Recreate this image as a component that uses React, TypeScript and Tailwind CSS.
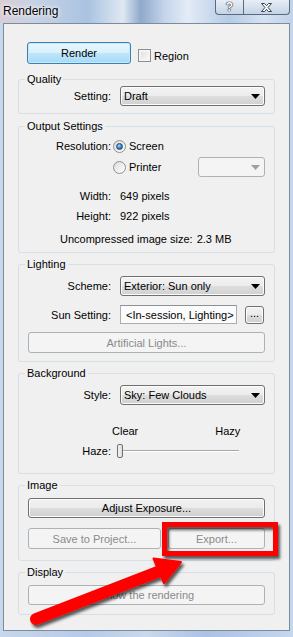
import React from 'react'

const Arrow = ({ color = '#000' }: { color?: string }) => (
  <svg width="9" height="5" viewBox="0 0 9 5" className="shrink-0">
    <path d="M0 0h9L4.5 5z" fill={color} />
  </svg>
)

function Combo({ value, w = 'w-[145px]' }: { value: string; w?: string }) {
  return (
    <div
      className={`${w} h-[20px] flex items-center justify-between pl-[3px] pr-[4px] rounded-[3px] border border-[#707070] bg-[linear-gradient(#f3f3f3,#ececec_50%,#dedede_51%,#d0d0d0)] shadow-[inset_0_0_0_1px_#fcfcfc]`}
    >
      <span>{value}</span>
      <Arrow />
    </div>
  )
}

function Btn({ children, disabled, className = '' }: { children: React.ReactNode; disabled?: boolean; className?: string }) {
  return (
    <div
      className={`flex items-center justify-center rounded-[3px] border ${
        disabled
          ? 'border-[#adb2b5] bg-[#f4f4f4] text-[#8a8a8a]'
          : 'border-[#707070] bg-[linear-gradient(#f2f2f2,#ebebeb_50%,#dddddd_51%,#cfcfcf)] shadow-[inset_0_0_0_1px_#fcfcfc]'
      } ${className}`}
    >
      {children}
    </div>
  )
}

function Radio({ on }: { on?: boolean }) {
  return (
    <div className="w-[13px] h-[13px] rounded-full border border-[#8e8f8f] bg-[linear-gradient(135deg,#dcdcdc,#ffffff)] flex items-center justify-center shrink-0">
      {on && <div className="w-[7px] h-[7px] rounded-full bg-[radial-gradient(circle_at_40%_35%,#a9d9f7,#2779b8_60%,#0d4d86)] border border-[#24497c]" />}
    </div>
  )
}

function Group({ title, className = '', children }: { title: string; className?: string; children: React.ReactNode }) {
  return (
    <fieldset className={`mx-[14px] px-[9px] border border-[#d5dfe5] rounded-[3px] ${className}`}>
      <legend className="-ml-[3px] px-[2px] leading-[14px]">{title}</legend>
      {children}
    </fieldset>
  )
}

function Row({ label, className = '', children }: { label: string; className?: string; children: React.ReactNode }) {
  return (
    <div className={`flex items-center ${className}`}>
      <div className="w-[83px] text-right shrink-0">{label}</div>
      <div className="ml-[9px] flex items-center">{children}</div>
    </div>
  )
}

export default function App() {
  return (
    <div className="relative w-[293px] h-[637px] overflow-hidden font-['Liberation_Sans',Arial,sans-serif] text-[11px] leading-[16px] text-black bg-[linear-gradient(90deg,#c7d7ec,#b4cbe6_30%,#c9d9ee_50%,#a9c3e2_70%,#c4d7ee)]">
      {/* title bar */}
      <div className="h-[23px] flex items-start bg-[linear-gradient(90deg,#d9cdd6,#c6d2e4_12%,#aac3e1_30%,#dfe8f2_42%,#8fa9cb_48%,#c3d4ea_56%,#e4ecf6_64%,#b5cbe6_78%,#d6e2f1_90%,#bfd3ea)]">
        <div className="ml-[3px] mt-[3px] text-[12px] leading-[16px] [text-shadow:0_0_6px_#fff,0_0_3px_#fff]">Rendering</div>
        <div className="ml-auto mr-[3px] flex h-[15px]">
          <div className="w-[29px] h-[15px] border border-t-0 border-[#5b6b7d] rounded-bl-[4px] bg-[linear-gradient(#e8eef6,#c4d3e5)] flex items-center justify-center">
            <span className="font-bold text-[12px] leading-[12px] text-white [text-shadow:0_0_1px_#222,0_0_1px_#222,0_0_1px_#222]">?</span>
          </div>
          <div className="w-[46px] h-[15px] border border-t-0 border-l-0 border-[#5b6b7d] rounded-br-[4px] bg-[linear-gradient(#e8eef6,#c4d3e5)] flex items-center justify-center">
            <svg width="13" height="11" viewBox="0 0 13 11">
              <path d="M1.5 1.5h3l2 2.2 2-2.2h3l-3.5 4 3.5 4h-3l-2-2.2-2 2.2h-3l3.5-4z" fill="#fff" stroke="#3a4450" strokeWidth="1" strokeLinejoin="round" />
            </svg>
          </div>
        </div>
      </div>

      {/* client area */}
      <div className="mx-[3px] h-[608px] border border-[#7d8b9b] bg-[#f0f0f0] flex flex-col">
        <div className="mt-[18px] ml-[23px] flex items-center">
          <div className="w-[104px] h-[22px] rounded-[3px] border border-[#3c7fb1] bg-[linear-gradient(#eaf6fd,#d9f0fc_50%,#bee6fd_51%,#a7d9f5)] shadow-[inset_0_0_0_1px_#c4e9fb] flex items-center justify-center">
            Render
          </div>
          <div className="ml-[7px] mt-[4px] w-[13px] h-[13px] border border-[#8e8f8f] bg-[linear-gradient(135deg,#dcdcdc,#fbfbfb)] shadow-[inset_0_0_0_2px_#f4f4f4]" />
          <span className="ml-[3px] mt-[5px]">Region</span>
        </div>

        <Group title="Quality" className="mt-[8px] pb-[7px]">
          <Row label="Setting:">
            <Combo value="Draft" />
          </Row>
        </Group>

        <Group title="Output Settings" className="mt-[5px] pb-[5px]">
          <div className="mt-[4px] h-[18px] flex items-center">
            <div className="w-[83px] text-right">Resolution:</div>
            <div className="ml-[2px]"><Radio on /></div>
            <span className="ml-[3px]">Screen</span>
          </div>
          <div className="mt-[2px] h-[20px] flex items-center">
            <div className="w-[83px]" />
            <div className="ml-[2px]"><Radio /></div>
            <span className="ml-[3px]">Printer</span>
            <div className="ml-auto w-[67px] h-[20px] rounded-[3px] border border-[#adb2b5] bg-[#f4f4f4] flex items-center justify-end pr-[4px]">
              <Arrow color="#a0a0a0" />
            </div>
          </div>
          <Row label="Width:" className="mt-[11px]">649 pixels</Row>
          <Row label="Height:" className="mt-[4px]">922 pixels</Row>
          <div className="mt-[7px] ml-[32px] flex">
            <span>Uncompressed image size:</span>
            <span className="ml-[4px]">2.3 MB</span>
          </div>
        </Group>

        <Group title="Lighting" className="mt-[4px] pb-[8px]">
          <Row label="Scheme:" className="mt-[5px]">
            <Combo value="Exterior: Sun only" />
          </Row>
          <Row label="Sun Setting:" className="mt-[9px]">
            <div className="w-[117px] h-[19px] border border-[#abadb3] border-t-[#8d9198] bg-[#fbfbfb] pl-[5px] flex items-center">
              &lt;In-session, Lighting&gt;
            </div>
            <Btn className="ml-[8px] w-[19px] h-[18px]">
              <span className="-mt-[3px]">...</span>
            </Btn>
          </Row>
          <Btn disabled className="mt-[8px] h-[21px]">Artificial Lights...</Btn>
        </Group>

        <Group title="Background" className="mt-[4px] pb-[14px]">
          <Row label="Style:" className="mt-[5px]">
            <Combo value="Sky: Few Clouds" />
          </Row>
          <div className="mt-[18px] flex">
            <span className="ml-[84px]">Clear</span>
            <span className="ml-[77px]">Hazy</span>
          </div>
          <div className="mt-[4px] h-[16px] flex items-center">
            <div className="w-[83px] text-right">Haze:</div>
            <div className="ml-[6px] w-[122px] h-[14px] relative flex items-center">
              <div className="w-full h-[2px] border-t border-[#a8a8a8] border-b border-b-[#ffffff]" />
              <div className="absolute left-0 top-0 w-[6px] h-[14px] rounded-[2px] border border-[#707070] bg-[linear-gradient(90deg,#f5f5f5,#dcdcdc)]" />
            </div>
          </div>
        </Group>

        <Group title="Image" className="mt-[4px] pb-[11px]">
          <Btn className="mt-[6px] h-[20px]">Adjust Exposure...</Btn>
          <div className="mt-[10px] flex">
            <Btn disabled className="w-[133px] h-[21px]">Save to Project...</Btn>
            <Btn disabled className="ml-[7px] w-[97px] h-[21px]">Export...</Btn>
          </div>
        </Group>

        <Group title="Display" className="mt-[4px] pb-[9px]">
          <Btn disabled className="mt-[6px] h-[20px]">Show the rendering</Btn>
        </Group>
      </div>

      {/* annotation overlay */}
      <svg className="absolute inset-0 pointer-events-none" width="293" height="637" viewBox="0 0 293 637">
        <defs>
          <filter id="sh" x="-20%" y="-20%" width="140%" height="160%">
            <feDropShadow dx="2" dy="3" stdDeviation="1.8" floodColor="#000" floodOpacity="0.65" />
          </filter>
        </defs>
        <g filter="url(#sh)">
          <rect x="164.5" y="524.5" width="111" height="29" fill="none" stroke="#f00" strokeWidth="5" />
          <line x1="36" y1="619" x2="160" y2="571" stroke="#f00" strokeWidth="12" strokeLinecap="round" />
          <path d="M181 562L153.5 558.5L164 583z" fill="#f00" stroke="#f00" strokeWidth="2" strokeLinejoin="round" />
        </g>
      </svg>
    </div>
  )
}
